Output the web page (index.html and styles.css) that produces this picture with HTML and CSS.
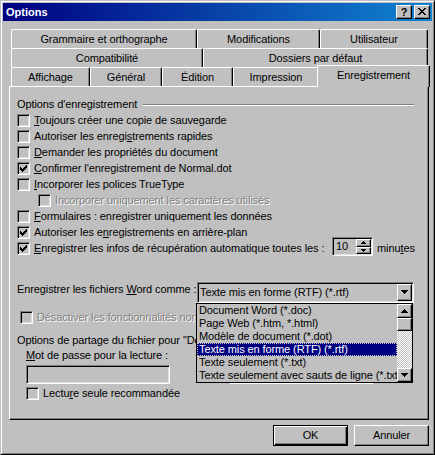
FILE: index.html
```html
<!DOCTYPE html>
<html lang="fr">
<head>
<meta charset="utf-8">
<title>Options</title>
<link rel="stylesheet" href="styles.css">
</head>
<body>
<div class="window">
  <div class="titlebar">
    <span class="title">Options</span>
    <div class="tbtns">
      <span class="tbtn help">?</span>
      <span class="tbtn close"><svg width="8" height="7" viewBox="0 0 8 7" shape-rendering="crispEdges"><path d="M0 0h2v1H0zM6 0h2v1H6zM1 1h2v1H1zM5 1h2v1H5zM2 2h4v1H2zM3 3h2v1H3zM2 4h4v1H2zM1 5h2v1H1zM5 5h2v1H5zM0 6h2v1H0zM6 6h2v1H6z"/></svg></span>
    </div>
  </div>

  <div class="tabs">
    <div class="tabrow">
      <div class="tab w-gram">Grammaire et orthographe</div>
      <div class="tab w-modif">Modifications</div>
      <div class="tab w-util">Utilisateur</div>
    </div>
    <div class="tabrow">
      <div class="tab w-compat">Compatibilité</div>
      <div class="tab w-doss">Dossiers par défaut</div>
    </div>
    <div class="tabrow">
      <div class="tab w-aff">Affichage</div>
      <div class="tab w-gen">Général</div>
      <div class="tab w-edit">Édition</div>
      <div class="tab w-impr">Impression</div>
      <div class="tab w-enr selected">Enregistrement</div>
    </div>
  </div>

  <div class="panel">
    <div class="ghead"><span>Options d'enregistrement</span><span class="etch"></span></div>

    <div class="opt first"><span class="cb"></span><span class="lbl"><u>T</u>oujours créer une copie de sauvegarde</span></div>
    <div class="opt"><span class="cb"></span><span class="lbl">Autoriser les enregi<u>s</u>trements rapides</span></div>
    <div class="opt"><span class="cb"></span><span class="lbl"><u>D</u>emander les propriétés du document</span></div>
    <div class="opt"><span class="cb"><svg width="7" height="7" viewBox="0 0 7 7" shape-rendering="crispEdges"><path d="M0 2h1v3H0zM1 3h1v3H1zM2 4h1v3H2zM3 3h1v3H3zM4 2h1v3H4zM5 1h1v3H5zM6 0h1v3H6z"/></svg></span><span class="lbl"><u>C</u>onfirmer l'enregistrement de Normal.dot</span></div>
    <div class="opt"><span class="cb"></span><span class="lbl"><u>I</u>ncorporer les polices TrueType</span></div>
    <div class="opt sub disabled"><span class="cb"></span><span class="lbl">Incorporer uniquement les caractères utilisés</span></div>
    <div class="opt"><span class="cb"></span><span class="lbl"><u>F</u>ormulaires : enregistrer uniquement les données</span></div>
    <div class="opt"><span class="cb"><svg width="7" height="7" viewBox="0 0 7 7" shape-rendering="crispEdges"><path d="M0 2h1v3H0zM1 3h1v3H1zM2 4h1v3H2zM3 3h1v3H3zM4 2h1v3H4zM5 1h1v3H5zM6 0h1v3H6z"/></svg></span><span class="lbl">Autoriser les e<u>n</u>registrements en arrière-plan</span></div>
    <div class="opt autosave">
      <span class="cb"><svg width="7" height="7" viewBox="0 0 7 7" shape-rendering="crispEdges"><path d="M0 2h1v3H0zM1 3h1v3H1zM2 4h1v3H2zM3 3h1v3H3zM4 2h1v3H4zM5 1h1v3H5zM6 0h1v3H6z"/></svg></span>
      <span class="lbl lbl-autosave"><u>E</u>nregistrer les infos de récupération automatique toutes les :</span>
      <span class="spin">
        <span class="spin-val">10</span>
        <span class="spin-btns">
          <span class="sbtn up"><svg width="5" height="3" viewBox="0 0 5 3" shape-rendering="crispEdges"><path d="M2 0h1v1H2zM1 1h3v1H1zM0 2h5v1H0z"/></svg></span>
          <span class="sbtn down"><svg width="5" height="3" viewBox="0 0 5 3" shape-rendering="crispEdges"><path d="M0 0h5v1H0zM1 1h3v1H1zM2 2h1v1H2z"/></svg></span>
        </span>
      </span>
      <span class="lbl minutes">minu<u>t</u>es</span>
    </div>

    <div class="saveas">
      <span class="lbl saveas-lbl">Enregistrer les fichiers <u>W</u>ord comme :</span>
      <div class="combo">
        <span class="combo-val">Texte mis en forme (RTF) (*.rtf)</span>
        <span class="combo-btn"><svg width="7" height="4" viewBox="0 0 7 4" shape-rendering="crispEdges"><path d="M0 0h7v1H0zM1 1h5v1H1zM2 2h3v1H2zM3 3h1v1H3z"/></svg></span>
        <div class="droplist">
          <div class="items">
            <div class="item">Document Word (*.doc)</div>
            <div class="item">Page Web (*.htm, *.html)</div>
            <div class="item">Modèle de document (*.dot)</div>
            <div class="item sel">Texte mis en forme (RTF) (*.rtf)</div>
            <div class="item">Texte seulement (*.txt)</div>
            <div class="item">Texte seulement avec sauts de ligne (*.txt)</div>
          </div>
          <div class="vscroll">
            <span class="scbtn"><svg width="7" height="4" viewBox="0 0 7 4" shape-rendering="crispEdges"><path d="M3 0h1v1H3zM2 1h3v1H2zM1 2h5v1H1zM0 3h7v1H0z"/></svg></span>
            <span class="thumb"></span>
            <span class="track"></span>
            <span class="scbtn"><svg width="7" height="4" viewBox="0 0 7 4" shape-rendering="crispEdges"><path d="M0 0h7v1H0zM1 1h5v1H1zM2 2h3v1H2zM3 3h1v1H3z"/></svg></span>
          </div>
        </div>
      </div>
    </div>

    <div class="opt compat disabled"><span class="cb"></span><span class="lbl">Désactiver les fonctionnalités non prises en charge par Word 97</span></div>

    <div class="ghead shead"><span>Options de partage du fichier pour "Document1"</span></div>

    <div class="share">
      <div class="pw-col">
        <span class="lbl"><u>M</u>ot de passe pour la lecture :</span>
        <span class="field"></span>
        <div class="opt ro"><span class="cb"></span><span class="lbl">Lectu<u>r</u>e seule recommandée</span></div>
      </div>
      <div class="pw-col second">
        <span class="field"></span>
      </div>
    </div>
  </div>

  <div class="buttons">
    <div class="btn default">OK</div>
    <div class="btn">Annuler</div>
  </div>
</div>
</body>
</html>
```

FILE: styles.css
```css
* { box-sizing: border-box; }

html, body {
  margin: 0;
  padding: 0;
}

body {
  width: 435px;
  height: 455px;
  overflow: hidden;
  background: #c0c0c0;
  font-family: "Liberation Sans", Arial, sans-serif;
  font-size: 11px;
  line-height: 13px;
  letter-spacing: -0.1px;
  color: #000;
}

svg { display: block; fill: #000; }

/* ---------- window frame ---------- */
.window {
  width: 435px;
  height: 455px;
  display: flex;
  flex-direction: column;
  background: #c0c0c0;
  border: 1px solid;
  border-color: #c0c0c0 #000 #000 #c0c0c0;
  box-shadow: inset 1px 1px #fff, inset -1px -1px #808080;
  padding: 2px;
}

.titlebar {
  flex: none;
  height: 18px;
  display: flex;
  align-items: center;
  justify-content: space-between;
  padding: 0 2px 0 3px;
  background: linear-gradient(90deg, #000080 0%, #1084d0 100%);
}

.title {
  color: #fff;
  font-weight: bold;
  letter-spacing: 0;
}

.tbtns {
  display: flex;
  gap: 2px;
}

.tbtn {
  width: 16px;
  height: 14px;
  background: #c0c0c0;
  border: 1px solid;
  border-color: #fff #000 #000 #fff;
  box-shadow: inset -1px -1px #808080;
  display: flex;
  justify-content: center;
}

.help {
  align-items: center;
  font-weight: bold;
  font-size: 11px;
  line-height: 12px;
  letter-spacing: 0;
}

.close {
  align-items: flex-start;
  padding-top: 2px;
}

/* ---------- tabs ---------- */
.tabs {
  flex: none;
  margin: 8px 0 0 8px;
}

.tabrow {
  display: flex;
  height: 19px;
}

.tab {
  flex: none;
  height: 19px;
  background: #c0c0c0;
  border-top: 1px solid #fff;
  border-left: 1px solid #fff;
  border-right: 1px solid #000;
  border-radius: 2px 2px 0 0;
  box-shadow: inset -1px 0 #808080;
  text-align: center;
  padding-top: 3px;
  white-space: nowrap;
}

.w-gram { width: 186px; }
.w-modif { width: 123px; }
.w-util { width: 108px; }
.w-compat { width: 192px; }
.w-doss { width: 225px; }
.w-aff { width: 79px; }
.w-gen { width: 72px; }
.w-edit { width: 71px; }
.w-impr { width: 86px; }
.w-enr { width: 109px; }

.tab.selected {
  width: 113px;
  height: 22px;
  margin: -2px -2px 0 -2px;
  position: relative;
  z-index: 2;
}

/* ---------- panel ---------- */
.panel {
  flex: none;
  margin-left: 6px;
  width: 420px;
  height: 334px;
  border: 1px solid;
  border-color: #fff #000 #000 #fff;
  box-shadow: inset -1px -1px #808080;
  padding: 11px 14px 0 7px;
}

.ghead {
  display: flex;
  height: 13px;
  white-space: nowrap;
}

.etch {
  flex: 1;
  align-self: flex-start;
  height: 2px;
  margin: 6px 0 0 6px;
  border-top: 1px solid #808080;
  border-bottom: 1px solid #fff;
}

.opt {
  display: flex;
  align-items: center;
  gap: 4px;
  height: 16px;
}

.opt.first { margin-top: 1px; }
.opt.sub { margin-left: 21px; }

.lbl {
  white-space: nowrap;
}

.disabled .lbl {
  color: #808080;
  text-shadow: 1px 1px 0 #fff;
}

.cb {
  flex: none;
  width: 13px;
  height: 13px;
  background: #c0c0c0;
  border: 1px solid;
  border-color: #808080 #fff #fff #808080;
  box-shadow: inset 1px 1px #000, inset -1px -1px #dfdfdf;
  display: flex;
  align-items: center;
  justify-content: center;
}

/* auto-save row */
.lbl-autosave {
  flex: none;
  width: 294px;
}

.spin {
  flex: none;
  align-self: flex-start;
  margin-top: -3px;
  width: 41px;
  height: 19px;
  display: flex;
  padding: 1px;
  background: #c0c0c0;
  border: 1px solid;
  border-color: #808080 #fff #fff #808080;
  box-shadow: inset 1px 1px #000, inset -1px -1px #dfdfdf;
}

.spin-val {
  flex: 1;
  padding-left: 2px;
  line-height: 15px;
}

.spin-btns {
  width: 15px;
  display: flex;
  flex-direction: column;
}

.sbtn {
  flex: none;
  background: #c0c0c0;
  border: 1px solid;
  border-color: #fff #000 #000 #fff;
  box-shadow: inset -1px -1px #808080;
  display: flex;
  justify-content: center;
  align-items: flex-start;
  padding-top: 1px;
}

.sbtn.up { height: 8px; }
.sbtn.down { height: 7px; }

/* save-as combo */
.saveas {
  display: flex;
  align-items: flex-start;
  height: 21px;
  margin-top: 26px;
}

.saveas-lbl { padding-top: 1px; }

.combo {
  margin-left: auto;
  width: 217px;
  height: 21px;
  position: relative;
  display: flex;
  background: #c0c0c0;
  border: 1px solid;
  border-color: #808080 #fff #fff #808080;
  box-shadow: inset 1px 1px #000, inset -1px -1px #dfdfdf;
  padding: 1px;
}

.combo-val {
  flex: 1;
  padding-left: 1px;
  line-height: 17px;
  white-space: nowrap;
  overflow: hidden;
}

.combo-btn {
  flex: none;
  width: 15px;
  height: 17px;
  background: #c0c0c0;
  border: 1px solid;
  border-color: #fff #000 #000 #fff;
  box-shadow: inset -1px -1px #808080;
  display: flex;
  justify-content: center;
  align-items: flex-start;
  padding-top: 5px;
}

.droplist {
  position: absolute;
  top: calc(100% + 1px);
  left: -2px;
  width: 217px;
  height: 80px;
  z-index: 5;
  display: flex;
  background: #c0c0c0;
  border: 1px solid #000;
}

.items {
  flex: 1;
  min-width: 0;
  overflow: hidden;
}

.item {
  height: 13px;
  line-height: 13px;
  padding-left: 2px;
  white-space: nowrap;
}

.item.sel {
  background: #000080;
  color: #fff;
  outline: 1px dotted #c0c0c0;
  outline-offset: -1px;
}

.vscroll {
  flex: none;
  width: 15px;
  display: flex;
  flex-direction: column;
}

.scbtn, .thumb {
  flex: none;
  background: #c0c0c0;
  border: 1px solid;
  border-color: #fff #000 #000 #fff;
  box-shadow: inset -1px -1px #808080;
}

.scbtn {
  height: 14px;
  display: flex;
  justify-content: center;
  align-items: flex-start;
  padding-top: 4px;
}

.thumb { height: 13px; }

.track {
  flex: 1;
  background-color: #fff;
  background-image: repeating-conic-gradient(#c0c0c0 0% 25%, #fff 0% 50%);
  background-size: 2px 2px;
}

/* compat + share (clipped where the open list covers them) */
.opt.compat {
  margin-top: 6px;
  margin-left: 3px;
  width: 177px;
  overflow: hidden;
}

.shead {
  margin-top: 9px;
  width: 180px;
  overflow: hidden;
}

.share {
  display: flex;
  margin: 2px 0 0 9px;
}

.pw-col {
  display: flex;
  flex-direction: column;
  width: 144px;
}

.pw-col.second {
  margin-left: 59px;
  padding-top: 13px;
}

.field {
  margin-top: 3px;
  width: 144px;
  height: 19px;
  background: #c0c0c0;
  border: 1px solid;
  border-color: #808080 #fff #fff #808080;
  box-shadow: inset 1px 1px #000, inset -1px -1px #dfdfdf;
}

.opt.ro { margin-top: 1px; }

/* ---------- buttons ---------- */
.buttons {
  flex: none;
  display: flex;
  justify-content: flex-end;
  gap: 6px;
  margin: 5px 3px 0 0;
}

.btn {
  width: 75px;
  height: 21px;
  display: flex;
  align-items: center;
  justify-content: center;
  background: #c0c0c0;
  border: 1px solid;
  border-color: #fff #000 #000 #fff;
  box-shadow: inset -1px -1px #808080;
}

.btn.default {
  border-color: #000;
  box-shadow: inset 1px 1px #fff, inset -1px -1px #000, inset -2px -2px #808080;
}
```
